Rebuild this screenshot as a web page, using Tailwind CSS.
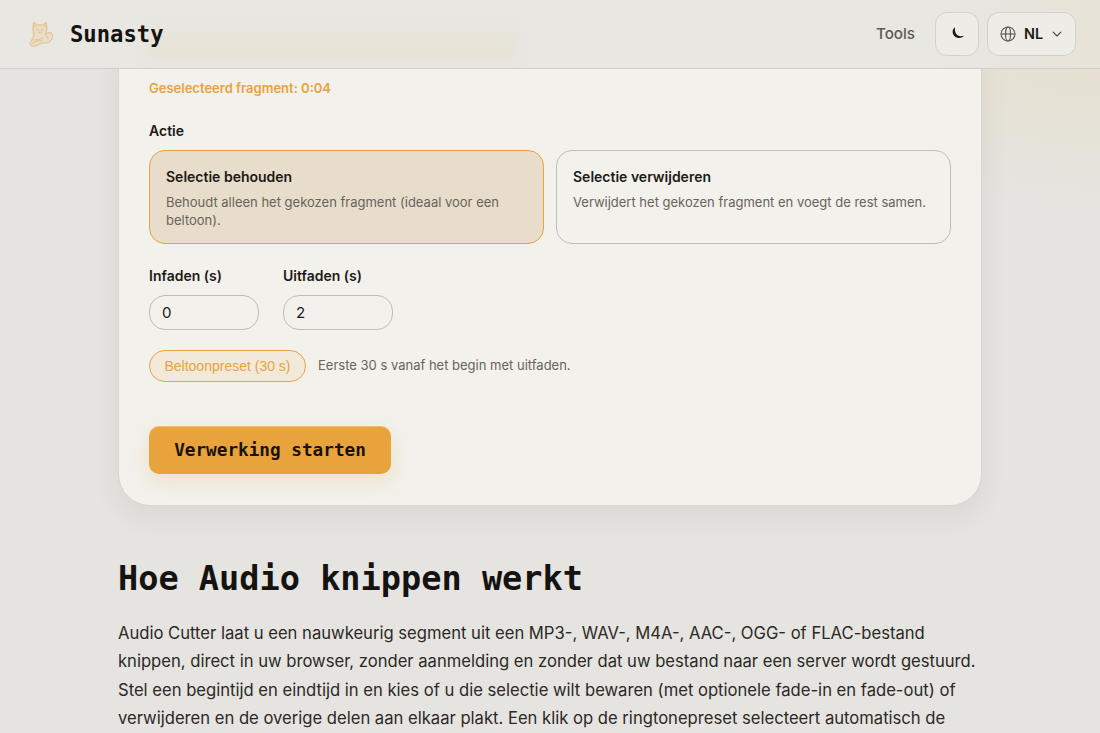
<!DOCTYPE html>
<html lang="nl">
<head>
    <meta charset="utf-8">
    <meta name="viewport" content="width=device-width, initial-scale=1.0"/>
    <title>Audio knippen - Sunasty</title>
    <script src="https://cdn.jsdelivr.net/npm/@tailwindcss/browser@4"></script>
</head>

<body class="h-screen overflow-hidden bg-[#e5e4e0] bg-[radial-gradient(ellipse_300px_190px_at_1100px_20px,#e6e0d0_0%,#e6e2d7_55%,transparent_100%)] bg-no-repeat font-['Inter',sans-serif] text-[#1c1a17] flex flex-col">

<header class="relative z-10 h-[69px] shrink-0 border-b border-[#cfcec9] bg-[#e8e7e2] bg-linear-to-r from-transparent from-85% to-[#e8e3d8] pl-6 pr-6 flex items-center justify-between">
    <!-- selection bar glowing through the header -->
    <div class="absolute left-[148px] top-[25px] w-[367px] h-[34px] bg-linear-to-b from-[#e8e5da]/50 to-[#e7e1d2] blur-[6px]"></div>

    <a class="relative flex items-center gap-3.5">
        <svg class="w-8 h-8" viewBox="0 0 32 32" fill="none" stroke="#e8c797" stroke-width="1.300" stroke-linecap="round" stroke-linejoin="round">
            <path fill="#e8dcc6" d="M9.500 15.500C8.600 12 8.800 8 9.600 4.500l3.800 2.700c1.700-.4 3.400-.4 5.100 0l3.800-2.700c.9 3.700 1 7.300-.1 10.700-1.600 3-10.600 3.300-12.700.3z"/>
            <path d="M13 11.500l1.500.7M19 11.500l-1.500.7M15.200 14.200l.9.700.9-.7M10 7.500l1.500 1M22 7.500l-1.500 1"/>
            <path fill="#e8dfce" d="M10 16.500c-.4 3-1.600 4.600-2.700 6.300-1.800 2.500-1 5.300 1.400 5.600 3.200 0 6-2.200 9.300-3.200 3-.7 6.800.5 7.800-1.700.7-1.800-.8-2.800-2-3.500-1-1.700-1.700-3-2.200-4.300"/>
            <path fill="#e8dfce" d="M22.500 16c2-2.300 5-1.800 5.700.3.900 2.800.8 4.900-2.500 6.700"/>
            <path d="M10 21.500c3 .8 6-.5 9-1.200M9 25c2.500-2.400 5.500-2.600 8.500-2.400"/>
        </svg>
        <span class="font-['DejaVu_Sans_Mono',monospace] font-bold text-[22.200px] leading-none text-[#15130f]">Sunasty</span>
    </a>

    <nav class="relative flex items-center gap-2">
        <a class="mr-3 text-[15.200px] font-medium text-[#5e5b53]">Tools</a>
        <button class="size-11 rounded-xl border border-[#d2d1cc] bg-[#eeece7] pl-0.5 pb-0.5 flex items-center justify-center">
            <svg class="w-3.5 h-3.5" viewBox="0 0 16 16" fill="#1c1a17">
                <path d="M4.500 1.300C1.800 3 1.200 6.500 2.400 9.400c1.900 4.600 8.600 6.100 12.500 1.800-4.200 1.400-8 0-9.500-3.200-1-2.200-1-4.500-.9-6.700z"/>
            </svg>
        </button>
        <button class="h-11 w-[89px] rounded-xl border border-[#d2d1cc] bg-[#eeece7] pl-3 pr-3 flex items-center">
            <svg class="w-4 h-4" viewBox="0 0 16 16" fill="none" stroke="#5e5b53" stroke-width="1.200">
                <circle cx="8" cy="8" r="7"/>
                <ellipse cx="8" cy="8" rx="2.500" ry="7"/>
                <path d="M1 8h14"/>
            </svg>
            <span class="ml-2 text-[14.400px] font-semibold">NL</span>
            <svg class="ml-auto w-3 h-3" viewBox="0 0 12 12" fill="none" stroke="#4a4740" stroke-width="1.100" stroke-linecap="round" stroke-linejoin="round">
                <path d="M2.200 4.200L6 8l3.800-3.800"/>
            </svg>
        </button>
    </nav>
</header>

<main class="w-[864px] mx-auto">
    <section class="-mt-8 h-[469px] mb-[49px] rounded-[32px] border border-[#d6d5cf] bg-[#f2f1ec] shadow-[0_10px_28px_rgba(40,38,20,0.07)] px-[30px] pt-10">
        <p class="text-[13px] leading-5 font-semibold text-[#e6a340]">Geselecteerd fragment: 0:04</p>

        <h3 class="mt-[23px] text-[14px] leading-5 font-semibold">Actie</h3>
        <div class="mt-[9px] grid grid-cols-2 gap-3 w-[802px]">
            <div class="h-[94px] rounded-2xl border border-[#e6a340] bg-[#e7ddca] px-4 pt-4">
                <div class="text-[14px] leading-5 font-semibold">Selectie behouden</div>
                <p class="mt-1.5 text-[13px] leading-[18px] text-[#68645b]">Behoudt alleen het gekozen fragment (ideaal voor een<br>beltoon).</p>
            </div>
            <div class="h-[94px] rounded-2xl border border-[#bebdb8] px-4 pt-4">
                <div class="text-[14px] leading-5 font-semibold">Selectie verwijderen</div>
                <p class="mt-1.5 text-[13px] leading-[18px] text-[#68645b]">Verwijdert het gekozen fragment en voegt de rest samen.</p>
            </div>
        </div>

        <div class="mt-[22px] flex gap-6">
            <label class="block w-[110px] text-[14px] leading-5 font-semibold">Infaden (s)
                <input type="text" value="0" class="mt-[9px] block w-full h-[35px] rounded-2xl border border-[#bebdb8] px-3 text-[15px] font-normal">
            </label>
            <label class="block w-[110px] text-[14px] leading-5 font-semibold">Uitfaden (s)
                <input type="text" value="2" class="mt-[9px] block w-full h-[35px] rounded-2xl border border-[#bebdb8] px-3 text-[15px] font-normal">
            </label>
        </div>

        <div class="mt-5 flex items-center gap-3">
            <button class="w-[157px] h-8 rounded-2xl border border-[#e6a340] bg-[#f3e9da] font-['Liberation_Sans',sans-serif] text-[14px] text-[#e6a340]">Beltoonpreset (30 s)</button>
            <span class="text-[13px] text-[#68645b]">Eerste 30 s vanaf het begin met uitfaden.</span>
        </div>

        <button class="mt-11 w-[242px] h-12 rounded-[10px] bg-[#e8a33d] shadow-[0_8px_20px_rgba(232,163,61,0.2),inset_0_1px_0_rgba(255,255,255,0.3)] font-['DejaVu_Sans_Mono',monospace] font-bold text-[17.700px] text-[#181208]">Verwerking starten</button>
    </section>

    <h2 class="font-['DejaVu_Sans_Mono',monospace] font-bold text-[33.600px] leading-12 text-[#15130f] whitespace-nowrap">Hoe Audio knippen werkt</h2>
    <p class="mt-4 text-[16.620px] leading-[28.400px] text-[#2b2925] whitespace-nowrap">
        Audio Cutter laat u een nauwkeurig segment uit een MP3-, WAV-, M4A-, AAC-, OGG- of FLAC-bestand<br>
        knippen, direct in uw browser, zonder aanmelding en zonder dat uw bestand naar een server wordt gestuurd.<br>
        Stel een begintijd en eindtijd in en kies of u die selectie wilt bewaren (met optionele fade-in en fade-out) of<br>
        verwijderen en de overige delen aan elkaar plakt. Een klik op de ringtonepreset selecteert automatisch de
    </p>
</main>

</body>
</html>
